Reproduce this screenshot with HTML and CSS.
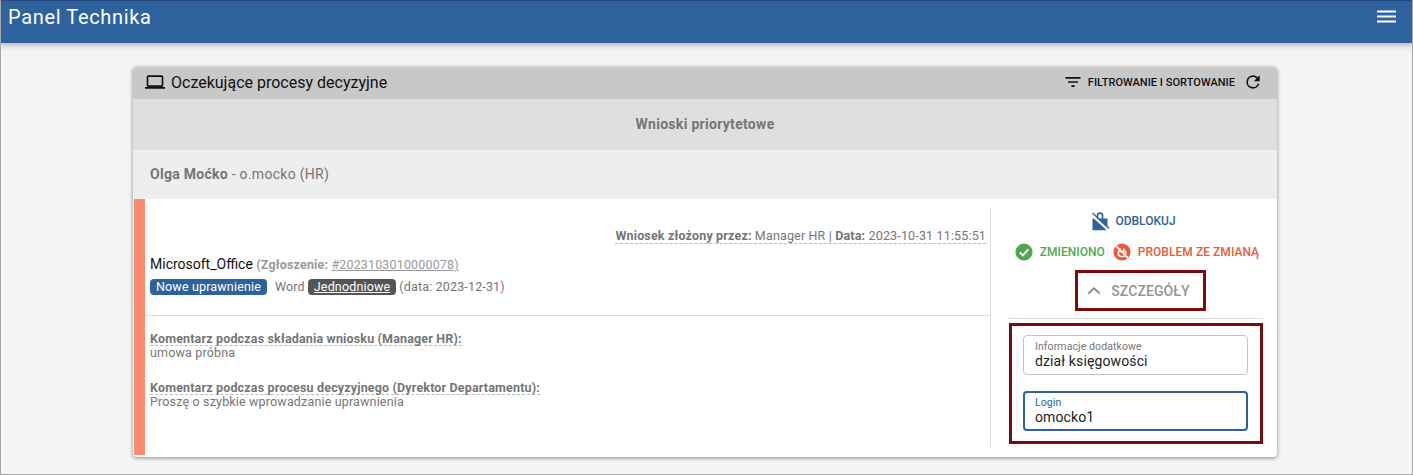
FILE: index.html
```html
<!DOCTYPE html>
<html lang="pl">
  <head>
    <meta charset="UTF-8" />
    <title>Panel Technika</title>
    <link rel="stylesheet" href="styles.css">
  </head>
  <body>
    <header class="topbar">
      <span class="topbar-title">Panel Technika</span>
      <svg class="menu-icon" viewBox="0 0 20 14" width="20" height="14"><path d="M0 1.500h19M0 6.500h19M0 11.500h19" stroke="#fff" stroke-width="2" fill="none"/></svg>
    </header>
    <main class="page">
      <section class="card">
        <div class="card-head">
          <svg class="laptop-icon" viewBox="0 0 24 24" width="20" height="20"><path d="M20 18c1.100 0 2-.9 2-2V6c0-1.100-.9-2-2-2H4c-1.100 0-2 .9-2 2v10c0 1.100.9 2 2 2H0v2h24v-2h-4zM4 6h16v10H4V6z" fill="#111"/></svg>
          <h1 class="card-title">Oczekujące procesy decyzyjne</h1>
          <div class="card-tools">
            <svg viewBox="0 0 24 24" width="20" height="20"><path d="M10 18h4v-2h-4v2zM3 6v2h18V6H3zm3 7h12v-2H6v2z" fill="#111"/></svg>
            <span class="tools-label">FILTROWANIE I SORTOWANIE</span>
            <svg class="refresh-icon" viewBox="0 0 24 24" width="20" height="20"><path d="M17.650 6.350A7.960 7.960 0 0 0 12 4a8 8 0 1 0 7.730 10h-2.080A6 6 0 1 1 12 6c1.660 0 3.140.69 4.220 1.780L13 11h7V4l-2.350 2.350z" fill="#111"/></svg>
          </div>
        </div>
        <div class="priority">Wnioski priorytetowe</div>
        <div class="person"><b>Olga Moćko</b> - o.mocko (HR)</div>
        <div class="request">
          <div class="request-main">
            <div class="submitted"><span class="dashed"><b>Wniosek złożony przez:</b> Manager HR | <b>Data:</b> 2023-10-31 11:55:51</span></div>
            <div class="app-line">Microsoft_Office <span class="ticket"><b>(Zgłoszenie:</b> <u>#2023103010000078)</u></span></div>
            <div class="tags">
              <span class="tag tag-blue">Nowe uprawnienie</span>
              <span class="tag-word">Word</span>
              <span class="tag tag-gray"><u>Jednodniowe</u></span>
              <span>(data: 2023-12-31)</span>
            </div>
            <div class="comments">
              <div class="comment">
                <b class="dashed">Komentarz podczas składania wniosku (Manager HR):</b>
                <div>umowa próbna</div>
              </div>
              <div class="comment">
                <b class="dashed">Komentarz podczas procesu decyzyjnego (Dyrektor Departamentu):</b>
                <div>Proszę o szybkie wprowadzanie uprawnienia</div>
              </div>
            </div>
          </div>
          <aside class="request-side">
            <div class="action action-blue">
              <svg viewBox="0 0 24 24" width="20" height="24"><path d="M8 9V5.500a4 4 0 0 1 8 0V9h5v14H3V9h5zm2 0h4V5.500a2 2 0 0 0-4 0V9z" fill="#2e629d"/><path d="M1.500 4.500 22 23" stroke="#fff" stroke-width="2.600"/><path d="M3 2.500 23 21" stroke="#2e629d" stroke-width="1.600"/></svg>
              ODBLOKUJ
            </div>
            <div class="status-row">
              <span class="action action-green">
                <svg viewBox="0 0 20 20" width="18" height="18"><circle cx="10" cy="10" r="9.500" fill="#4fa84f"/><path d="M5.500 10.500 8.700 13.700 14.800 7" stroke="#fff" stroke-width="2.200" fill="none"/></svg>
                ZMIENIONO
              </span>
              <span class="action action-red">
                <svg viewBox="0 0 20 20" width="18" height="18"><circle cx="10" cy="10" r="9.500" fill="#ea5a38"/><path d="M6 9.500h8v3.500l-2 2H8l-2-2zM8 6v3M12 6v3" stroke="#fff" stroke-width="1.700" fill="none"/><path d="M3.500 3.500 16.500 16.500" stroke="#fff" stroke-width="2"/></svg>
                PROBLEM ZE ZMIANĄ
              </span>
            </div>
            <div class="details-wrap">
              <div class="details-btn mark">
                <svg viewBox="0 0 16 10" width="14" height="9"><path d="M1.500 8.500 8 2.500l6.500 6" stroke="#8c8c8c" stroke-width="2.200" fill="none"/></svg>
                SZCZEGÓŁY
              </div>
            </div>
            <div class="fields mark">
              <div class="field">
                <label>Informacje dodatkowe</label>
                <div class="field-value">dział księgowości</div>
              </div>
              <div class="field field-focus">
                <label>Login</label>
                <div class="field-value">omocko1</div>
              </div>
            </div>
          </aside>
        </div>
      </section>
    </main>
  </body>
</html>
```

FILE: styles.css
```css
* {
  box-sizing: border-box;
}
html,
body {
  height: 100%;
}
body {
  margin: 0;
  font-family: Roboto, Arial, sans-serif;
  font-size: 14px;
  color: #757575;
  background-color: #f5f5f5;
  border: 1px solid #a6a6a6;
  border-top: none;
  overflow: hidden;
}
.topbar {
  height: 43px;
  margin: 0 -1px;
  padding: 0 16px 10px 8px;
  display: flex;
  justify-content: space-between;
  align-items: center;
  background-color: #2e629d;
  border-top: 1px solid #264a7d;
  box-shadow: 0 2px 6px rgba(0, 0, 0, 0.3);
  color: #fff;
}
.topbar-title {
  font-size: 20px;
  letter-spacing: 0.65px;
}
.menu-icon {
  display: block;
}
.page {
  padding: 24px 135px 0 132px;
}
.card {
  height: 390px;
  border-radius: 4px;
  background-color: #fff;
  box-shadow: 0 1px 4px rgba(0, 0, 0, 0.45);
  overflow: hidden;
}
.card-head {
  height: 32px;
  padding: 0 14px 2px 12px;
  display: flex;
  align-items: center;
  background-color: #c8c8c8;
  color: #111;
}
.card-title {
  margin: 0 0 0 6px;
  font-size: 16px;
  font-weight: 400;
}
.card-tools {
  margin-left: auto;
  display: flex;
  align-items: center;
}
.tools-label {
  margin-left: 5px;
  font-size: 11px;
  font-weight: 500;
  letter-spacing: 0.04px;
}
.refresh-icon {
  margin-left: 8px;
}
.priority {
  height: 51px;
  padding-bottom: 2px;
  display: flex;
  align-items: center;
  justify-content: center;
  background-color: #dfdfdf;
  font-weight: 700;
  letter-spacing: 0.3px;
}
.person {
  height: 49px;
  padding: 0 0 2px 17px;
  display: flex;
  align-items: center;
  white-space: pre;
  background-color: #eee;
  letter-spacing: 0.28px;
}
.request {
  height: 256px;
  margin-left: 1px;
  display: flex;
  border-left: 11px solid #fd8a6e;
}
.request-main {
  width: 846px;
  height: 239px;
  margin-top: 9px;
  border-right: 1px solid #ddd;
  font-size: 12.500px;
  letter-spacing: 0.16px;
}
.dashed {
  border-bottom: 1px dashed #bbb;
}
.submitted {
  margin-top: 20px;
  padding-right: 4px;
  text-align: right;
  line-height: 15px;
}
.app-line {
  margin-top: 13px;
  padding-left: 5px;
  line-height: 17px;
  color: #111;
  font-size: 14px;
  letter-spacing: 0;
}
.ticket {
  color: #999;
  font-size: 12.500px;
  letter-spacing: 0.16px;
}
.tags {
  margin-top: 5px;
  padding-left: 5px;
  display: flex;
  align-items: center;
  line-height: 16px;
  height: 17px;
}
.tag {
  height: 16px;
  padding: 0 6px;
  border-radius: 4px;
  color: #fff;
}
.tag-blue {
  background-color: #2e629d;
}
.tag-word {
  margin: 0 3px 0 8px;
}
.tag-gray {
  margin-right: 3px;
  background-color: #555;
}
.comments {
  margin-top: 20px;
  padding: 16px 0 0 5px;
  border-top: 1px solid #ddd;
  line-height: 14px;
}
.comment {
  margin-bottom: 21px;
}
.comment b {
  display: block;
  width: fit-content;
  line-height: 13px;
}
.request-side {
  flex: 1;
  padding: 4px 14px 0 17px;
}
.action {
  display: flex;
  align-items: center;
  font-size: 12px;
  font-weight: 500;
  white-space: nowrap;
}
.action-blue {
  justify-content: center;
  gap: 5px;
  height: 24px;
  padding: 1px 5px 0 0;
  margin-top: 5px;
  color: #2e629d;
}
.status-row {
  margin-top: 11px;
  padding-left: 3px;
  display: flex;
  justify-content: center;
  gap: 8px;
}
.status-row .action {
  gap: 7px;
}
.action-green {
  color: #4fa84f;
}
.action-red {
  color: #ea5a38;
  letter-spacing: 0.05px;
}
.details-wrap {
  margin-top: 4px;
  height: 54px;
  padding: 5px 0 0 10px;
  text-align: center;
  border-bottom: 1px solid #ddd;
}
.mark {
  border: 3px solid #7b0a0a;
}
.details-btn {
  width: 131px;
  height: 41px;
  margin: 0 auto;
  padding-right: 4px;
  display: flex;
  align-items: center;
  justify-content: center;
  gap: 10px;
  color: #959595;
  font-size: 14px;
  font-weight: 500;
  letter-spacing: 0.1px;
}
.fields {
  width: 254px;
  height: 121px;
  margin: 4px 0 0 1px;
  padding: 9px 12px 0 11px;
}
.field {
  height: 40px;
  padding: 5px 11px 0;
  border: 1px solid #c4c4c4;
  border-radius: 4px;
  margin-bottom: 16px;
}
.field label {
  display: block;
  font-size: 10.500px;
  line-height: 12px;
  color: #757575;
  letter-spacing: 0.1px;
}
.field-value {
  font-size: 14px;
  line-height: 17px;
  color: #222;
  letter-spacing: 0.12px;
}
.field-focus {
  border: 2px solid #2e629d;
  padding: 4px 10px 0;
}
.field-focus label {
  color: #2e629d;
}
```
